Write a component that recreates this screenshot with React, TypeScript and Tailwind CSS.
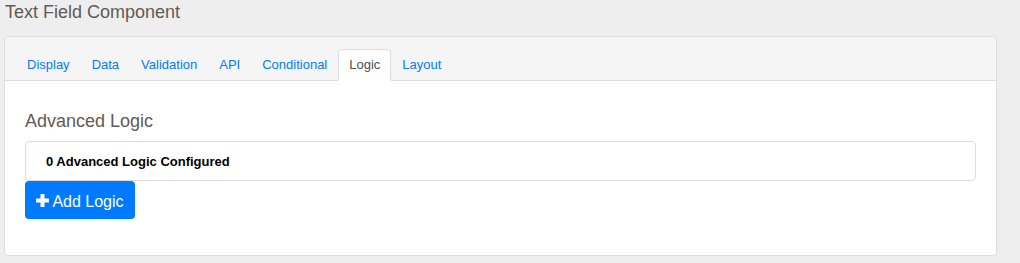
const TABS = ['Display', 'Data', 'Validation', 'API', 'Conditional', 'Logic', 'Layout'];

export default function App() {
  const active = 'Logic';
  return (
    <div className="w-[1020px] h-[263px] bg-[#eeeeee] pl-[4px] pr-[23px] overflow-hidden" style={{ fontFamily: '"Liberation Sans", Arial, sans-serif' }}>
      <h1 className="text-[18px] leading-[24px] text-[#5f5b57] pl-[1px] pt-0 h-[36px]">Text Field Component</h1>
      <div className="rounded-[4px] border border-[#dddddd] bg-white overflow-hidden">
        <div className="bg-[#f5f5f5] border-b border-[#dddddd] pt-[12px] px-[11px]">
          <ul className="flex -mb-px">
            {TABS.map((t) => (
              <li key={t}>
                <span
                  className={`block px-[10px] h-[32px] leading-[30px] text-[13px] rounded-t-[4px] border ${
                    t === active
                      ? 'bg-white border-[#dddddd] border-b-white text-[#495057]'
                      : 'border-transparent text-[#007bff]'
                  }`}
                >
                  {t}
                </span>
              </li>
            ))}
          </ul>
        </div>
        <div className="px-[20px] pt-[28px] pb-[36px]">
          <h2 className="text-[18px] leading-[24px] text-[#5f5b57] mb-[8px]">Advanced Logic</h2>
          <div className="border border-[#dddddd] rounded-[4px] h-[40px] flex items-center px-[20px] pt-[2px]">
            <span className="text-[13px] font-bold text-black">0 Advanced Logic Configured</span>
          </div>
          <button className="mt-0 h-[38px] w-[110px] rounded-[4px] bg-[#007bff] text-white text-[16px] flex items-center justify-center gap-[3px] pt-[3px]">
            <svg width="13" height="13" viewBox="0 0 13 13" fill="white" className="-mt-[2px]">
              <rect x="4.5" y="0" width="4" height="13" rx="0.5" />
              <rect x="0" y="4.5" width="13" height="4" rx="0.5" />
            </svg>
            <span>Add Logic</span>
          </button>
        </div>
      </div>
    </div>
  );
}
